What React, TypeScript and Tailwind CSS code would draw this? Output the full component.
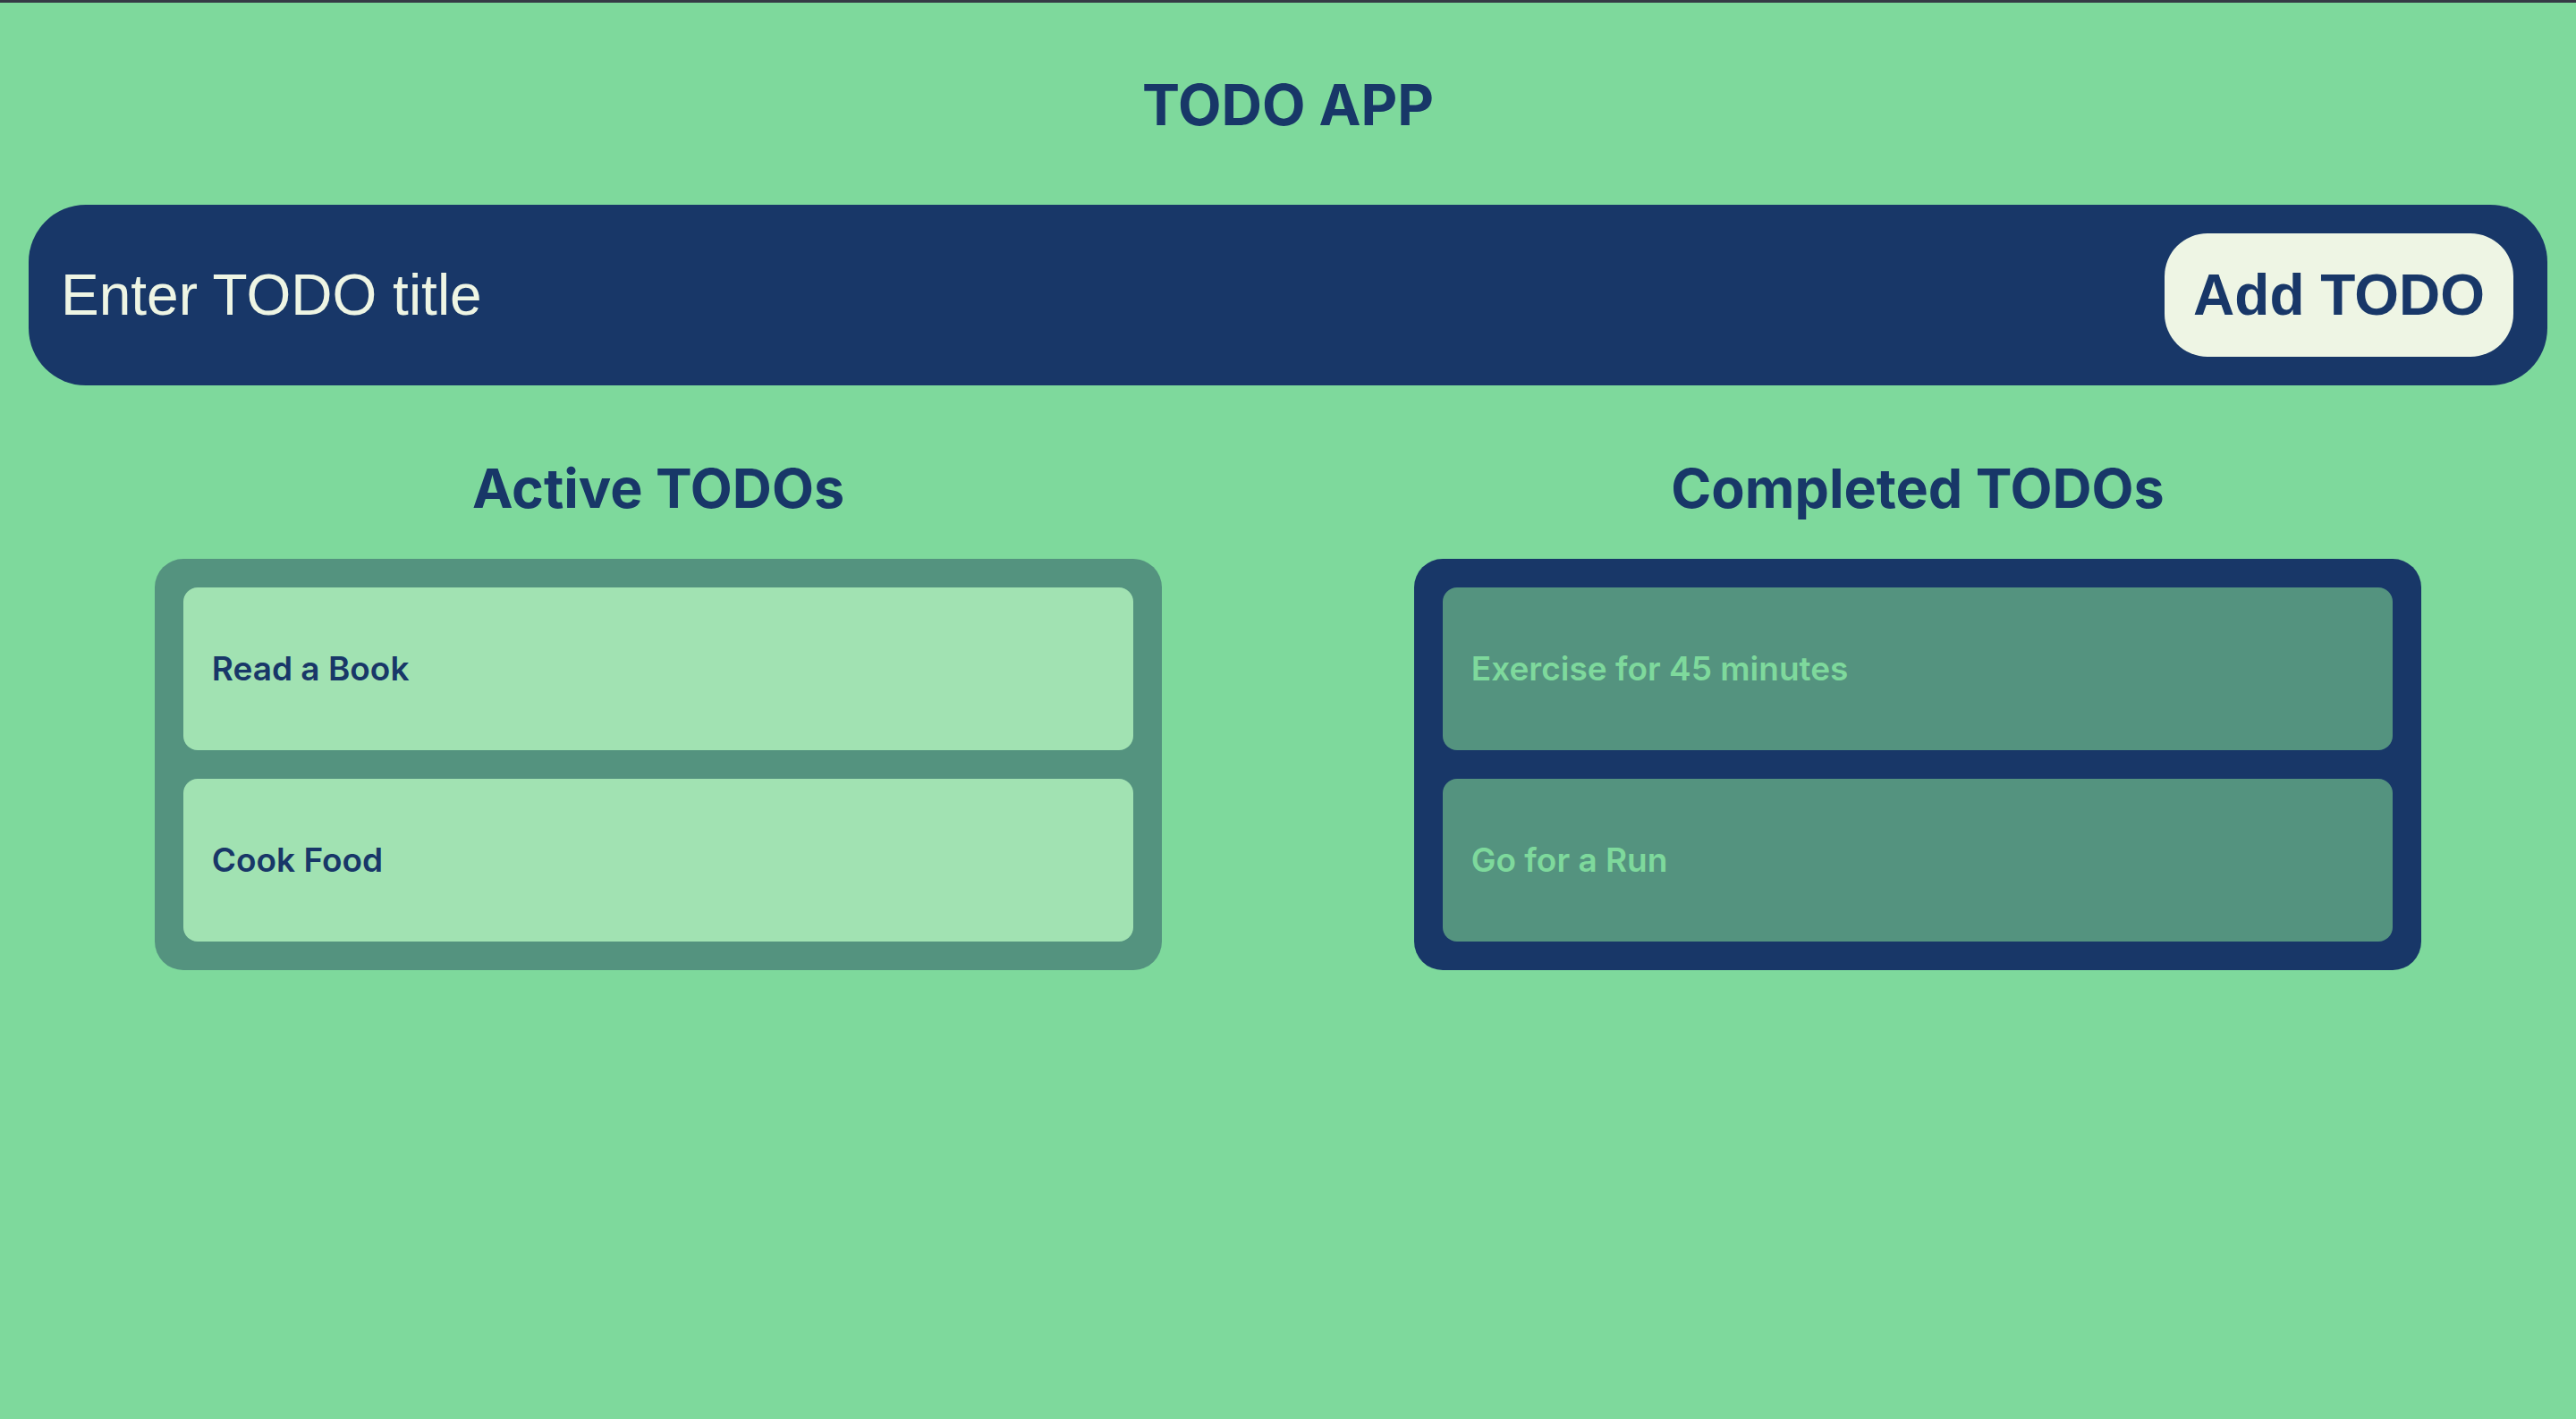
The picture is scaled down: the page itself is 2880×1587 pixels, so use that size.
import { useState } from "react";

type Todo = { id: number; title: string; done: boolean };

const initialTodos: Todo[] = [
  { id: 1, title: "Read a Book", done: false },
  { id: 2, title: "Cook Food", done: false },
  { id: 3, title: "Exercise for 45 minutes", done: true },
  { id: 4, title: "Go for a Run", done: true },
];

function TodoList({ heading, todos, done }: { heading: string; todos: Todo[]; done: boolean }) {
  return (
    <div className="flex flex-col items-center">
      <h2 className="text-[61px] font-bold leading-[normal] text-[#183768]">{heading}</h2>
      <ul
        className={`mt-[42px] w-4/5 rounded-[32px] p-8 flex flex-col gap-8 ${
          done ? "bg-[#183768]" : "bg-[#54937f]"
        }`}
      >
        {todos.map((todo) => (
          <li
            key={todo.id}
            className={`rounded-2xl px-8 py-16 text-[37px] leading-[54px] font-semibold ${
              done ? "bg-[#54937f] text-[#7ed99c]" : "bg-[#a1e2b2] text-[#183768]"
            }`}
          >
            {todo.title}
          </li>
        ))}
      </ul>
    </div>
  );
}

export default function App() {
  const [todos] = useState<Todo[]>(initialTodos);
  const [title, setTitle] = useState("");

  return (
    <div className="min-h-screen bg-[#7ed99c] border-t-[3px] border-[#353a45] font-['Inter',sans-serif]">
      <h1 className="pt-[76px] text-center text-[63px] font-bold leading-[normal] text-[#183768]">TODO APP</h1>

      <form
        className="mx-8 mt-[74px] flex items-center gap-8 rounded-[64px] bg-[#183768] py-8 pl-[36px] pr-[38px]"
        onSubmit={(e) => e.preventDefault()}
      >
        <input
          value={title}
          onChange={(e) => setTitle(e.target.value)}
          placeholder="Enter TODO title"
          className="flex-1 min-w-0 bg-transparent outline-none text-[64px] leading-[normal] text-[#eef5e4] placeholder:text-[#eef5e4] font-['Liberation_Sans',Arial,sans-serif]"
        />
        <button
          type="submit"
          className="rounded-[48px] bg-[#eef5e4] p-8 text-[64px] leading-[normal] font-bold text-[#183768] font-['Liberation_Sans',Arial,sans-serif]"
        >
          Add TODO
        </button>
      </form>

      <div className="mt-[78px] grid grid-cols-2 px-8">
        <TodoList heading="Active TODOs" todos={todos.filter((t) => !t.done)} done={false} />
        <TodoList heading="Completed TODOs" todos={todos.filter((t) => t.done)} done={true} />
      </div>
    </div>
  );
}
